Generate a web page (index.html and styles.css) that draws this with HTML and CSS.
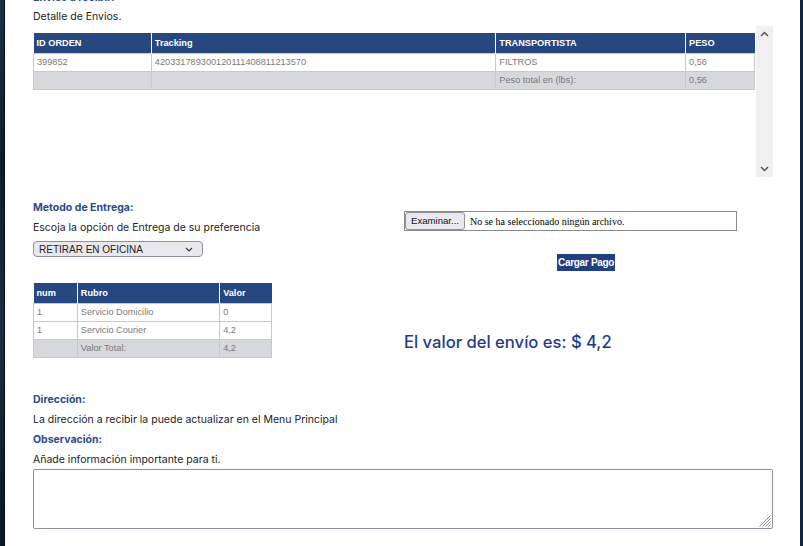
FILE: index.html
```html
<!DOCTYPE html>
<html lang="es">
<head>
<meta charset="utf-8">
<title>Envios a recibir</title>
<link rel="stylesheet" href="styles.css">
</head>
<body>
<div class="backdrop"></div>
<div class="panel">
  <h4 class="label cut">Envios a recibir:</h4>
  <p class="text detail">Detalle de Envios.</p>
  <div class="scrollbox">
    <div class="scroll-content">
      <table class="grid ship">
        <thead>
          <tr><th class="c-id">ID ORDEN</th><th class="c-track">Tracking</th><th class="c-trans">TRANSPORTISTA</th><th class="c-peso">PESO</th></tr>
        </thead>
        <tbody>
          <tr><td>399852</td><td>420331789300120111408811213570</td><td>FILTROS</td><td>0,56</td></tr>
          <tr class="total"><td></td><td></td><td>Peso total en (lbs):</td><td>0,56</td></tr>
        </tbody>
      </table>
    </div>
    <div class="scrollbar">
      <svg width="9" height="6" viewBox="0 0 9 6"><path d="M1 5 L4.5 1.5 L8 5" fill="none" stroke="#555" stroke-width="1.5"/></svg>
      <svg width="9" height="6" viewBox="0 0 9 6"><path d="M1 1 L4.5 4.5 L8 1" fill="none" stroke="#555" stroke-width="1.5"/></svg>
    </div>
  </div>

  <div class="row">
    <div class="col-left">
      <h4 class="label">Metodo de Entrega:</h4>
      <p class="text">Escoja la opción de Entrega de su preferencia</p>
      <div class="select">
        <span>RETIRAR EN OFICINA</span>
        <svg width="8" height="5" viewBox="0 0 8 5"><path d="M1 1 L4 4 L7 1" fill="none" stroke="#333" stroke-width="1.1"/></svg>
      </div>
      <table class="grid cost">
        <thead>
          <tr><th class="c-num">num</th><th class="c-rubro">Rubro</th><th class="c-valor">Valor</th></tr>
        </thead>
        <tbody>
          <tr><td>1</td><td>Servicio Domicilio</td><td>0</td></tr>
          <tr><td>1</td><td>Servicio Courier</td><td>4,2</td></tr>
          <tr class="total"><td></td><td>Valor Total:</td><td>4,2</td></tr>
        </tbody>
      </table>
    </div>
    <div class="col-right">
      <div class="file">
        <span class="file-btn">Examinar...</span>
        <span class="file-name">No se ha seleccionado ningún archivo.</span>
      </div>
      <button class="cargar">Cargar Pago</button>
      <div class="valor">El valor del envío es: $ 4,2</div>
    </div>
  </div>

  <h4 class="label">Dirección:</h4>
  <p class="text">La dirección a recibir la puede actualizar en el Menu Principal</p>
  <h4 class="label">Observación:</h4>
  <p class="text">Añade información importante para ti.</p>
  <div class="textarea">
    <svg class="grip" width="13" height="13" viewBox="0 0 13 13"><path d="M12.5 1.5 L1.5 12.5 M12.5 4.5 L4.5 12.5 M12.5 7.5 L7.5 12.5 M12.5 10.5 L10.5 12.5" stroke="#8a8a8a" stroke-width="1"/></svg>
  </div>
</div>
</body>
</html>
```

FILE: styles.css
```css
html, body {
  margin: 0;
  padding: 0;
  height: 100%;
  overflow: hidden;
}
body {
  background: #13263a;
  display: flex;
}
.backdrop {
  width: 4px;
  flex: none;
  background: linear-gradient(#1b3247, #0e1d2b 30%, #1a2f44 60%, #0b1722);
}
.panel {
  flex: 1;
  margin-right: 3px;
  background: #fff;
  border-left: 1px solid #06090d;
  padding: 0 27px 0 28px;
  font-family: "Inter", "Liberation Sans", sans-serif;
  color: #222;
  overflow: hidden;
}
.label {
  margin: 0;
  font-size: 10.5px;
  line-height: 20px;
  font-weight: 700;
  color: #2b4b8c;
}
.label.cut {
  margin-top: -12px;
}
.text {
  margin: 0;
  font-size: 10.5px;
  line-height: 20px;
  color: #222;
}
.text.detail {
  line-height: 18px;
}
.scrollbox {
  display: flex;
  height: 151px;
}
.scroll-content {
  flex: 1;
  padding-top: 7px;
  padding-right: 1px;
}
.scrollbar {
  width: 17px;
  background: #f0f0f0;
  display: flex;
  flex-direction: column;
  justify-content: space-between;
  align-items: center;
  padding: 5px 0 5px;
  box-sizing: border-box;
}
.grid {
  border-collapse: collapse;
  font-family: "Liberation Sans", Arial, sans-serif;
  font-size: 9.2px;
}
.grid th {
  background: #26487f;
  color: #fff;
  font-weight: 700;
  text-align: left;
  height: 20px;
  padding: 0 3px;
  border-left: 1px solid #fff;
  box-sizing: border-box;
}
.grid th:first-child {
  border-left: none;
}
.grid td {
  height: 18px;
  padding: 0 3px;
  color: #7a7a7a;
  border: 1px solid #c9c9c9;
  box-sizing: border-box;
}
.grid tr.total td {
  background: #d6d8dc;
}
.ship {
  width: 722px;
}
.ship .c-id { width: 118px; }
.ship .c-track { width: 345px; }
.ship .c-trans { width: 190px; }
.ship .c-peso { width: 69px; }

.row {
  display: flex;
  margin-top: 21px;
}
.col-left {
  width: 371px;
}
.select {
  margin-top: 3px;
  width: 170px;
  height: 16px;
  box-sizing: border-box;
  border: 1px solid #8f8f9d;
  border-radius: 4px;
  background: #e9e9ed;
  display: flex;
  align-items: center;
  justify-content: space-between;
  padding: 0 9px 0 5px;
  font-family: "Liberation Sans", Arial, sans-serif;
  font-size: 10px;
  color: #222;
}
.cost {
  margin-top: 26px;
  width: 239px;
}
.cost .c-num { width: 44px; }
.cost .c-rubro { width: 143px; }
.cost .c-valor { width: 52px; }

.col-right {
  width: 333px;
  padding-top: 13px;
  display: flex;
  flex-direction: column;
  align-items: flex-start;
}
.file {
  width: 333px;
  height: 20px;
  box-sizing: border-box;
  border: 1px solid #8a8a8a;
  display: flex;
  align-items: center;
  gap: 5px;
}
.file-btn {
  height: 18px;
  box-sizing: border-box;
  padding: 0 5px;
  border: 1px solid #8f8f9d;
  border-radius: 3px;
  background: #e9e9ed;
  font-family: "Liberation Sans", Arial, sans-serif;
  font-size: 9.6px;
  line-height: 16px;
  color: #111;
}
.file-name {
  font-family: "Liberation Serif", "Times New Roman", serif;
  font-size: 10px;
  color: #000;
}
.cargar {
  margin: 23px 0 0 153px;
  height: 17px;
  padding: 0 1px;
  border: none;
  background: #213f82;
  color: #fff;
  font-family: "Liberation Sans", Arial, sans-serif;
  font-weight: 700;
  font-size: 10px;
  letter-spacing: -0.3px;
}
.valor {
  margin-top: 59px;
  font-size: 16.6px;
  line-height: 24px;
  font-weight: 500;
  color: #1f3c8a;
}
.row + .label {
  margin-top: 32px;
}
.textarea {
  position: relative;
  margin-top: -1px;
  height: 60px;
  box-sizing: border-box;
  border: 1px solid #8f8f9d;
  border-radius: 2px;
}
.grip {
  position: absolute;
  right: 1px;
  bottom: 1px;
}
```
